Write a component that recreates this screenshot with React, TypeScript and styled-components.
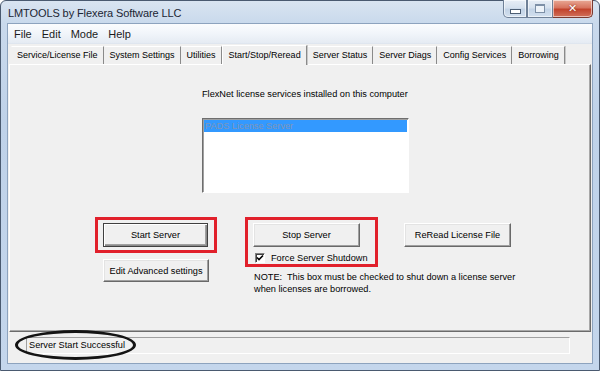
import React from 'react';
import styled, { createGlobalStyle } from 'styled-components';

const GlobalStyle = createGlobalStyle`
  html, body {
    margin: 0;
    padding: 0;
    width: 600px;
    height: 371px;
    overflow: hidden;
    background: #fff;
  }
  #root {
    width: 600px;
    height: 371px;
  }
`

const Window = styled.div`
    width: 600px;
    height: 371px;
    box-sizing: border-box;
    display: flex;
    flex-direction: column;
    padding: 0 6px 6px 6px;
    border: 1px solid #4a5a70;
    border-radius: 6px 6px 0 0;
    background: linear-gradient(180deg, #d9e4f1 0px, #c9d9ec 22px, #bfd2e9 120px, #c4d6ec 100%);
    font-family: "Liberation Sans", Arial, sans-serif;
    color: #000;
`
const TitleBar = styled.div`
    height: 22px;
    display: flex;
    align-items: flex-start;
`
const Title = styled.div`
    padding: 6px 0 0 1px;
    font-size: 11px;
    color: #1b2533;
    letter-spacing: -0.1px;
`
const Controls = styled.div`
    margin-left: auto;
    display: flex;
    height: 18px;
    margin-top: -1px;
`
const CtrlButton = styled.div<{ $w: number; $close?: boolean }>`
    width: ${p => p.$w}px;
    box-sizing: border-box;
    display: flex;
    align-items: center;
    justify-content: center;
    border: 1px solid ${p => (p.$close ? '#7a3a30' : '#6f8097')};
    border-left-width: ${p => (p.$close ? 0 : 1)}px;
    border-top: 0;
    border-radius: ${p => (p.$close ? '0 0 5px 0' : '0')};
    background: ${p => (p.$close
        ? 'linear-gradient(180deg, #e9a996 0%, #d7745f 45%, #c2432c 55%, #d1705a 100%)'
        : 'linear-gradient(180deg, #e8eef6 0%, #d6e1ee 45%, #c3d3e6 55%, #d3e0ef 100%)')};
    box-shadow: inset 0 0 0 1px rgba(255,255,255,0.55);
    &:first-child { border-radius: 0 0 0 5px; }
`
const MinGlyph = styled.div`
    width: 9px;
    height: 3px;
    margin-top: 6px;
    background: #fff;
    border: 1px solid #4d5e74;
`
const MaxGlyph = styled.div`
    width: 8px;
    height: 6px;
    border: 1px solid #7e90a7;
    border-top-width: 2px;
    background: #eef3f9;
`
const CloseGlyph = styled.span`
    font-family: "DejaVu Sans", sans-serif;
    font-weight: bold;
    font-size: 11px;
    color: #fff;
    text-shadow: 0 0 2px #7a2010;
`

const Client = styled.div`
    flex: 1;
    display: flex;
    flex-direction: column;
    background: #f0f0f0;
    border: 1px solid #8da3be;
`
const MenuBar = styled.div`
    height: 19px;
    display: flex;
    align-items: center;
    padding-left: 1px;
    background: linear-gradient(180deg, #fbfcfe 0%, #f1f5fa 50%, #e5ebf3 100%);
    border-bottom: 1px solid #dfe6ef;
`
const MenuItem = styled.div`
    padding: 0 5px 0 5px;
    font-size: 11px;
    color: #1b1b1b;
`
const TabArea = styled.div`
    flex: 1;
    display: flex;
    flex-direction: column;
    padding: 0 1px 0 1px;
`
const TabStrip = styled.div`
    height: 20px;
    display: flex;
    align-items: flex-end;
    padding-left: 2px;
`
const Tab = styled.div<{ $active?: boolean }>`
    height: ${p => (p.$active ? 20 : 18)}px;
    box-sizing: border-box;
    display: flex;
    align-items: center;
    padding: ${p => (p.$active ? '0 5px 2px 6px' : '0 5px 1px 5px')};
    font-size: 9px;
    white-space: nowrap;
    border-top: 1px solid #fff;
    border-left: 1px solid ${p => (p.$active ? '#fff' : 'transparent')};
    border-right: 1px solid #8a8a8a;
    box-shadow: 1px 0 0 #c8c8c8;
    position: relative;
    margin-bottom: ${p => (p.$active ? -1 : 0)}px;
    background: #f0f0f0;
    z-index: ${p => (p.$active ? 1 : 0)};
`
const TabPage = styled.div`
    flex: 1;
    display: flex;
    flex-direction: column;
    border: 1px solid;
    border-color: #fff #6b6b6b #6b6b6b #fff;
    box-shadow: inset -1px -1px 0 #a8a8a8;
    font-size: 9.2px;
`
const ServiceSection = styled.div`
    display: flex;
    flex-direction: column;
    padding: 23px 0 0 192px;
`
const Label = styled.div`
    line-height: 12px;
    margin-bottom: 18px;
`
const ListBox = styled.div`
    width: 207px;
    height: 75px;
    box-sizing: border-box;
    background: #fff;
    border: 1px solid;
    border-color: #6e6e6e #fff #fff #6e6e6e;
    box-shadow: inset 1px 1px 0 #a0a0a0;
    padding: 1px 1px 0 1px;
`
const ListItem = styled.div<{ $selected?: boolean }>`
    height: 12px;
    line-height: 12px;
    padding-left: 1px;
    font-size: 9.2px;
    background: ${p => (p.$selected ? '#3399ff' : 'transparent')};
    color: ${p => (p.$selected ? '#7f95b8' : '#000')};
`
const ButtonRow = styled.div`
    display: flex;
    align-items: flex-start;
    margin-top: 24px;
    padding-left: 85px;
`
const Column = styled.div<{ $w: number; $gap?: number; $top?: number }>`
    width: ${p => p.$w}px;
    display: flex;
    flex-direction: column;
    margin-right: ${p => p.$gap ?? 0}px;
    padding-top: ${p => p.$top ?? 0}px;
`
const Highlight = styled.div<{ $h: number }>`
    height: ${p => p.$h}px;
    box-sizing: border-box;
    border: 3px solid #e1202b;
    padding: 3px 0 0 5px;
    display: flex;
    flex-direction: column;
`
const Button = styled.div<{ $w: number; $h?: number; $default?: boolean; $indent?: number; $top?: number }>`
    width: ${p => p.$w}px;
    height: ${p => p.$h ?? 24}px;
    margin: ${p => p.$top ?? 0}px 0 0 ${p => p.$indent ?? 0}px;
    box-sizing: border-box;
    display: flex;
    align-items: center;
    justify-content: center;
    font-size: 9.2px;
    background: #f0f0f0;
    border: 1px solid;
    border-color: ${p => (p.$default ? '#404040' : '#fff #696969 #696969 #fff')};
    box-shadow: ${p => (p.$default
        ? 'inset 1px 1px 0 #fff, inset -1px -1px 0 #8a8a8a, inset -2px -2px 0 #a0a0a0'
        : 'inset -1px -1px 0 #a0a0a0, inset 1px 1px 0 #e3e3e3')};
`
const CheckRow = styled.div`
    display: flex;
    align-items: center;
    margin: 6px 0 0 2px;
    gap: 6px;
    font-size: 9.2px;
`
const CheckBox = styled.div`
    width: 10px;
    height: 10px;
    box-sizing: border-box;
    background: #fff;
    border: 1px solid;
    border-color: #808080 #fff #fff #808080;
    box-shadow: inset 1px 1px 0 #404040;
    display: flex;
    align-items: center;
    justify-content: center;
`
const Note = styled.div`
    margin: 4px 0 0 9px;
    line-height: 12px;
    white-space: nowrap;
`
const StatusBar = styled.div`
    height: 31px;
    position: relative;
    padding: 5px 0 0 17px;
    box-sizing: border-box;
`
const StatusField = styled.div`
    width: 544px;
    height: 17px;
    box-sizing: border-box;
    border: 1px solid;
    border-color: #a0a0a0 #fff #fff #a0a0a0;
    font-size: 9.2px;
    line-height: 15px;
    padding-left: 2px;
`
const Ellipse = styled.div`
    position: absolute;
    left: 6px;
    top: -2px;
    width: 121px;
    height: 30px;
    box-sizing: border-box;
    border: 3px solid #141414;
    border-radius: 50%;
`

const tabs = ['Service/License File', 'System Settings', 'Utilities', 'Start/Stop/Reread',
    'Server Status', 'Server Diags', 'Config Services', 'Borrowing']

const App: React.FC = () => {
    return (
        <Window>
            <GlobalStyle />
            <TitleBar>
                <Title>LMTOOLS by Flexera Software LLC</Title>
                <Controls>
                    <CtrlButton $w={24}><MinGlyph /></CtrlButton>
                    <CtrlButton $w={26}><MaxGlyph /></CtrlButton>
                    <CtrlButton $w={40} $close><CloseGlyph>✕</CloseGlyph></CtrlButton>
                </Controls>
            </TitleBar>
            <Client>
                <MenuBar>
                    {['File', 'Edit', 'Mode', 'Help'].map(m => <MenuItem key={m}>{m}</MenuItem>)}
                </MenuBar>
                <TabArea>
                    <TabStrip>
                        {tabs.map(t => <Tab key={t} $active={t === 'Start/Stop/Reread'}>{t}</Tab>)}
                    </TabStrip>
                    <TabPage>
                        <ServiceSection>
                            <Label>FlexNet license services installed on this computer</Label>
                            <ListBox>
                                <ListItem $selected>PADS License Server</ListItem>
                            </ListBox>
                        </ServiceSection>
                        <ButtonRow>
                            <Column $w={122} $gap={28}>
                                <Highlight $h={36}>
                                    <Button $w={105} $default>Start Server</Button>
                                </Highlight>
                                <Button $w={106} $h={23} $top={6} $indent={8}>Edit Advanced settings</Button>
                            </Column>
                            <Column $w={133} $gap={26}>
                                <Highlight $h={50}>
                                    <Button $w={107}>Stop Server</Button>
                                    <CheckRow>
                                        <CheckBox>
                                            <svg width="8" height="8" viewBox="0 0 8 8">
                                                <path d="M1 3.5 L3 5.5 L7 1.5" stroke="#000" strokeWidth="1.6" fill="none" />
                                            </svg>
                                        </CheckBox>
                                        Force Server Shutdown
                                    </CheckRow>
                                </Highlight>
                                <Note>
                                    NOTE:&nbsp; This box must be checked to shut down a license server<br />
                                    when licenses are borrowed.
                                </Note>
                            </Column>
                            <Column $w={107} $top={6}>
                                <Button $w={107}>ReRead License File</Button>
                            </Column>
                        </ButtonRow>
                    </TabPage>
                    <StatusBar>
                        <StatusField>Server Start Successful</StatusField>
                        <Ellipse />
                    </StatusBar>
                </TabArea>
            </Client>
        </Window>
    )
}

export default App;
